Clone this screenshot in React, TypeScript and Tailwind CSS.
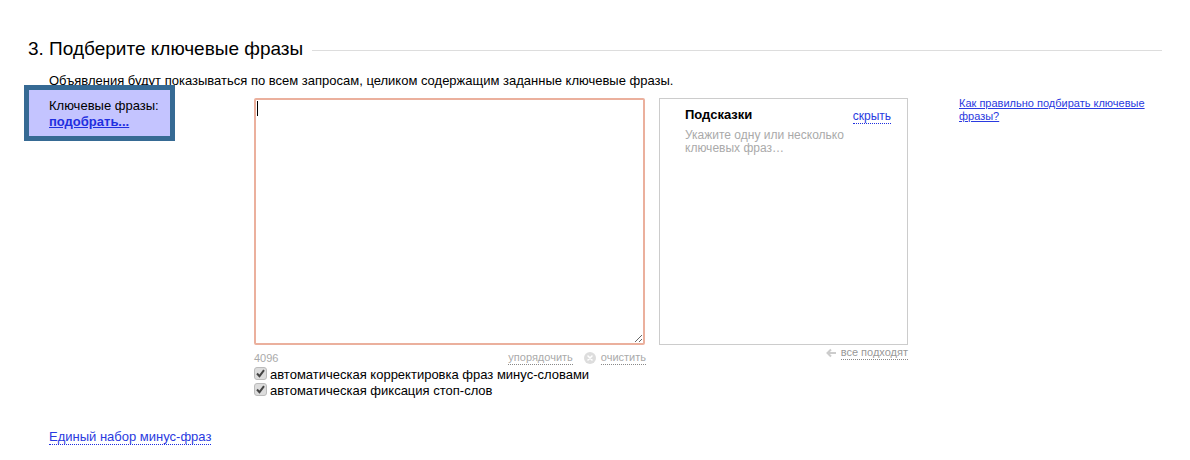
import React from "react";

const Checkbox = ({ label }: { label: string }) => (
  <label className="flex h-4 items-center text-[13px] leading-4 text-black">
    <span className="relative mr-[3px] mb-[3px] flex h-[13px] w-[13px]">
      <input
        type="checkbox"
        defaultChecked
        className="m-0 h-[13px] w-[13px] appearance-none rounded-[3px] border border-[#bbbbbb] bg-[#dcdcdc]"
      />
      <svg width="13" height="13" viewBox="0 0 13 13" className="pointer-events-none absolute top-0 left-0">
        <path d="M3 6.5l2.5 2.6L10 3.2" fill="none" stroke="#444444" strokeWidth="2" />
      </svg>
    </span>
    {label}
  </label>
);

export default function App() {
  return (
    <div className="h-[460px] w-[1190px] overflow-hidden bg-white font-['Liberation_Sans',Arial,sans-serif] text-black">
      {/* heading */}
      <div className="flex items-center pt-[38px] pl-7 pr-7">
        <h2 className="text-[19px] leading-[22px] font-normal whitespace-nowrap">3. Подберите ключевые фразы</h2>
        <div className="mt-[3px] ml-[9px] h-px flex-1 bg-[#dddddd]"></div>
      </div>

      <p className="mt-[13px] pl-[49px] text-[13px] leading-[15px]">
        Объявления будут показываться по всем запросам, целиком содержащим заданные ключевые фразы.
      </p>

      <div className="mt-[-3px] flex items-start">
        {/* blue box */}
        <div className="relative ml-6 h-14 w-[151px] border-[5px] border-[#366a94] bg-[#c4c4ff] pt-[8px] pl-5 text-[13px] leading-4">
          <div>Ключевые фразы:</div>
          <a href="#" className="font-bold text-[#1f2fe0] underline">подобрать...</a>
        </div>

        {/* textarea column */}
        <div className="ml-[79px] mt-[13px] w-[391px]">
          <div className="relative h-[247px]">
            <textarea className="block h-full w-full rounded-[2px] border-2 border-[#ebb09d] bg-white outline-none" readOnly></textarea>
            <span className="absolute top-[3px] left-[3px] h-[15px] w-px bg-black"></span>
          </div>
          <div className="mt-[5px] -mr-px flex items-center text-[11px] leading-[14px] text-[#aaaaaa]">
            <span>4096</span>
            <a href="#" className="ml-auto border-b border-dotted border-[#888888]">упорядочить</a>
            <svg width="12" height="12" viewBox="0 0 12 12" className="mr-[5px] ml-[11px]">
              <circle cx="6" cy="6" r="6" fill="#dddddd" />
              <path d="M4 4l4 4M8 4l-4 4" stroke="#ffffff" strokeWidth="1.6" strokeLinecap="round" />
            </svg>
            <a href="#" className="border-b border-dotted border-[#888888]">очистить</a>
          </div>
          <div className="mt-[2px] flex flex-col">
            <Checkbox label="автоматическая корректировка фраз минус-словами" />
            <Checkbox label="автоматическая фиксация стоп-слов" />
          </div>
        </div>

        {/* suggestions */}
        <div className="ml-[14px] mt-[13px] w-[249px]">
          <div className="h-[247px] border border-[#cccccc] pt-[8px] pr-4 pl-[25px]">
            <div className="flex items-start justify-between">
              <b className="text-[13px] leading-4">Подсказки</b>
              <a href="#" className="mt-[2px] border-b border-dotted border-[#1f2fe0] text-[12px] leading-[14px] text-[#2a3ae0]">скрыть</a>
            </div>
            <p className="mt-[5px] w-[170px] text-[12px] leading-[13px] text-[#aaaaaa]">
              Укажите одну или несколько ключевых фраз…
            </p>
          </div>
          <div className="mt-px flex items-center justify-end text-[11px] leading-[13px] text-[#999999]">
            <svg width="10" height="10" viewBox="0 0 10 10" className="mr-[5px]">
              <path d="M5 1.5L1.5 5L5 8.5M2 5h8" fill="none" stroke="#cccccc" strokeWidth="2" />
            </svg>
            <a href="#" className="border-b border-dotted border-[#888888]">все подходят</a>
          </div>
        </div>

        {/* help link */}
        <a href="#" className="mt-[12px] ml-[51px] w-[200px] text-[11px] leading-[13px] text-[#2a3ae0] underline">
          Как правильно подбирать ключевые фразы?
        </a>
      </div>

      <div className="mt-[30px] pl-[49px] text-[13px] leading-[15px]">
        <a href="#" className="border-b border-dotted border-[#1f2fe0] text-[#2a3ae0]">Единый набор минус-фраз</a>
      </div>
    </div>
  );
}
